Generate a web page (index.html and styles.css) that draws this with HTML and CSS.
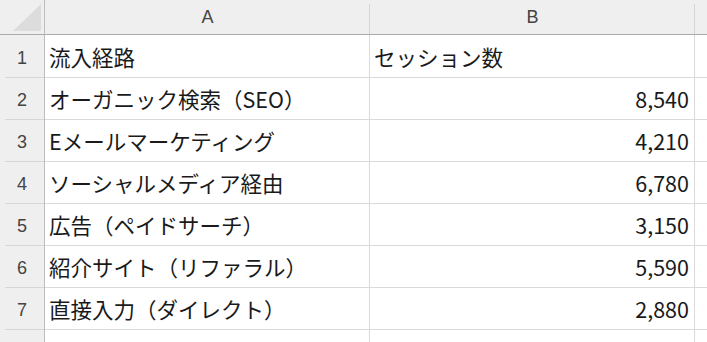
FILE: index.html
```html
<!DOCTYPE html>
<html lang="ja">
<head>
<meta charset="utf-8">
<link rel="stylesheet" href="styles.css">
</head>
<body>
<div class="sheet">
  <div class="corner"><svg width="44" height="34" viewBox="0 0 44 34"><polygon points="13,31 41,31 41,4" fill="#dcdcdc"/></svg></div>
  <div class="colhead">A</div>
  <div class="colhead">B</div>
  <div class="colhead"></div>

  <div class="rowhead">1</div>
  <div class="cell">流入経路</div>
  <div class="cell">セッション数</div>
  <div class="cell"></div>

  <div class="rowhead">2</div>
  <div class="cell">オーガニック検索（SEO）</div>
  <div class="cell num">8,540</div>
  <div class="cell"></div>

  <div class="rowhead">3</div>
  <div class="cell">Eメールマーケティング</div>
  <div class="cell num">4,210</div>
  <div class="cell"></div>

  <div class="rowhead">4</div>
  <div class="cell">ソーシャルメディア経由</div>
  <div class="cell num">6,780</div>
  <div class="cell"></div>

  <div class="rowhead">5</div>
  <div class="cell">広告（ペイドサーチ）</div>
  <div class="cell num">3,150</div>
  <div class="cell"></div>

  <div class="rowhead">6</div>
  <div class="cell">紹介サイト（リファラル）</div>
  <div class="cell num">5,590</div>
  <div class="cell"></div>

  <div class="rowhead">7</div>
  <div class="cell">直接入力（ダイレクト）</div>
  <div class="cell num">2,880</div>
  <div class="cell"></div>

  <div class="rowhead"></div>
  <div class="cell"></div>
  <div class="cell"></div>
  <div class="cell"></div>
</div>
</body>
</html>
```
FILE: styles.css
```css
html, body {
  margin: 0;
  padding: 0;
  background: #ffffff;
  overflow: hidden;
}
.sheet {
  display: grid;
  grid-template-columns: 45px 325px 325px 40px;
  grid-template-rows: 35px 43px repeat(6, 42px) 42px;
  width: 707px;
  height: 342px;
  overflow: hidden;
  font-family: "Noto Sans CJK JP", "Noto Sans", sans-serif;
  color: #1a1a1a;
}
.corner {
  background: #efefef;
  border-right: 1px solid #bdbdbd;
  border-bottom: 1px solid #ababab;
  display: flex;
}
.colhead {
  background:
    linear-gradient(#d6d6d6, #d6d6d6) no-repeat right 0 top 4px / 1px calc(100% - 4px),
    #efefef;
  border-bottom: 1px solid #ababab;
  display: flex;
  align-items: center;
  justify-content: center;
  font-family: "Liberation Sans", "Open Sans", sans-serif;
  font-size: 18px;
  color: #444444;
  padding-top: 1px;
}
.rowhead {
  background:
    linear-gradient(#d6d6d6, #d6d6d6) no-repeat left 5px bottom 0 / calc(100% - 5px) 1px,
    #efefef;
  border-right: 1px solid #bdbdbd;
  display: flex;
  align-items: center;
  justify-content: center;
  font-family: "Liberation Sans", "Open Sans", sans-serif;
  font-size: 18px;
  color: #444444;
  padding-top: 3px;
}
.cell {
  border-right: 1px solid #dadada;
  border-bottom: 1px solid #dadada;
  display: flex;
  align-items: center;
  padding: 0 5px 0 4px;
  font-size: 21.5px;
  white-space: nowrap;
  overflow: hidden;
}
.num {
  justify-content: flex-end;
}
```
